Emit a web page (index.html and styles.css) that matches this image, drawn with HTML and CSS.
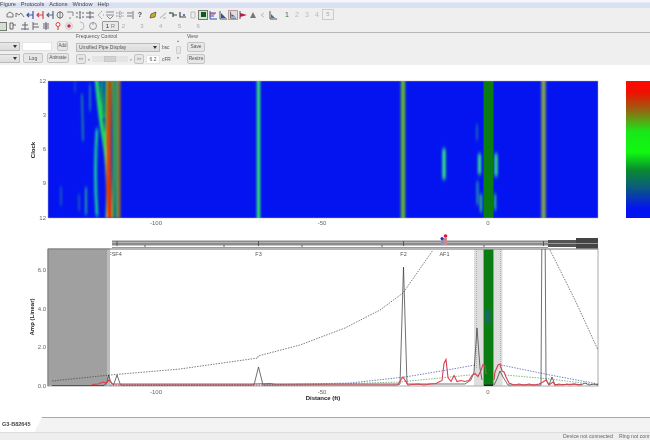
FILE: index.html
```html
<!DOCTYPE html>
<html lang="en">
<head>
<meta charset="utf-8">
<title>G3-B82645</title>
<link rel="stylesheet" href="styles.css">
</head>
<body>
<div class="app">
  <nav class="menu"><span>Figure</span><span>Protocols</span><span>Actions</span><span>Window</span><span>Help</span></nav>

  <div class="tools">
    <div class="row row-a">
      <svg class="ic" viewBox="0 0 10 10"><path d="M2 7h6V4L5 2 2 4z" fill="none" stroke="#777"/></svg>
      <svg class="ic" viewBox="0 0 10 10"><path d="M1 7V3l3 2 2-2 3 4" fill="none" stroke="#777"/></svg>
      <svg class="ic" viewBox="0 0 10 10"><path d="M8 1v8M8 5H2M4 3L2 5l2 2" fill="none" stroke="#3a55b0" stroke-width="1.2"/></svg>
      <svg class="ic" viewBox="0 0 10 10"><path d="M8 1v8M8 5H2M4 3L2 5l2 2" fill="none" stroke="#d0405a" stroke-width="1.2"/></svg>
      <svg class="ic" viewBox="0 0 10 10"><path d="M8 1v8M8 5H2M4 3L2 5l2 2" fill="none" stroke="#556688" stroke-width="1.2"/></svg>
      <svg class="ic" viewBox="0 0 10 10"><circle cx="5" cy="5" r="3" fill="none" stroke="#777"/><path d="M5 1v8" stroke="#777"/></svg>
      <svg class="ic" viewBox="0 0 10 10"><path d="M2 2h6v4M6 8H4" fill="none" stroke="#888"/></svg>
      <svg class="ic" viewBox="0 0 10 10"><path d="M1 3h8M1 7h8M5 1v8" fill="none" stroke="#667" stroke-dasharray="2 1"/></svg>
      <svg class="ic" viewBox="0 0 10 10"><path d="M1 3h8M1 7h8M5 1v8" fill="none" stroke="#667"/></svg>
      <svg class="ic" viewBox="0 0 10 10"><path d="M7 1L3 5l4 4M8 5h1" fill="none" stroke="#999" stroke-dasharray="2 1"/></svg>
      <svg class="ic" viewBox="0 0 10 10"><path d="M1 2h8M2 6l3 3 3-3M1 5h8" fill="none" stroke="#889"/></svg>
      <svg class="ic" viewBox="0 0 10 10"><path d="M1 3h8M1 6h8M5 1v8" fill="none" stroke="#889" stroke-dasharray="1.5 1"/></svg>
      <svg class="ic" viewBox="0 0 10 10"><path d="M8 1v8M2 3h5M2 6h5" fill="none" stroke="#778"/></svg>
      <span class="glyph">?</span>
      <i class="sp3"></i>
      <svg class="ic" viewBox="0 0 10 10"><path d="M2 8l1-4 5-2-1 5z" fill="#c8b020" stroke="#333" stroke-width=".6"/></svg>
      <svg class="ic" viewBox="0 0 10 10"><path d="M2 8l6-5M5 8h3" stroke="#aaa" fill="none"/></svg>
      <svg class="ic" viewBox="0 0 10 10"><path d="M2 3h3v4M5 5h4" stroke="#445" fill="none" stroke-width="1.2"/><circle cx="2" cy="3" r="1" fill="#2a9040"/></svg>
      <svg class="ic" viewBox="0 0 10 10"><path d="M2 2v5h6" stroke="#445" fill="none" stroke-width="1.2"/><circle cx="6" cy="5" r="1" fill="#2a50a0"/></svg>
      <svg class="ic" viewBox="0 0 10 10"><path d="M3 2h4v6H3z" stroke="#bbb" fill="none"/></svg>
      <span class="active"><b></b></span>
      <svg class="ic" viewBox="0 0 10 10"><path d="M2 1v8h7M2 3h6M2 6h4" stroke="#3050b0" fill="none"/><path d="M2 4h5" stroke="#c04050"/></svg>
      <svg class="ic" viewBox="0 0 10 10"><path d="M2 1v8h7" stroke="#555" fill="none"/><path d="M3 8V3l5 5z" fill="#3050b0"/></svg>
      <span class="hi"><svg viewBox="0 0 10 10"><path d="M2 1v8h7" stroke="#444" fill="none"/><path d="M3 7V4l5 3z" fill="#3050b0"/></svg></span>
      <svg class="ic" viewBox="0 0 10 10"><path d="M2 1v8" stroke="#555"/><path d="M2 3l7 2-7 2z" fill="#b02040"/></svg>
      <svg class="ic" viewBox="0 0 10 10"><path d="M5 2l3 6H2z" fill="#777"/></svg>
      <svg class="ic" viewBox="0 0 10 10"><path d="M3 5l3-2M3 5l3 2" stroke="#bbb" fill="none"/></svg>
      <svg class="ic" viewBox="0 0 10 10"><path d="M2 1v8h7" stroke="#555" fill="none"/><path d="M3 8V4l4 4z" fill="#4a70a0"/></svg>
      <i class="sp4"></i>
      <span class="num strong">1</span><span class="num">2</span><span class="num">3</span><span class="num">4</span><span class="num boxed">5</span>
    </div>
    <div class="row row-b">
      <span class="greenbox"></span>
      <svg class="ic ml1" viewBox="0 0 10 10"><path d="M2 2h3v6H2zM5 4h3" stroke="#666" fill="none"/></svg>
      <svg class="ic ml2" viewBox="0 0 10 10"><path d="M5 1v8M2 4h6M1 8h8" stroke="#667" fill="none"/></svg>
      <svg class="ic" viewBox="0 0 10 10"><path d="M3 1v8M3 3h5M3 6h6" stroke="#667" fill="none"/></svg>
      <svg class="ic ml1" viewBox="0 0 10 10"><path d="M5 1v8M2 3h6M2 5h6M2 7h6" stroke="#667" fill="none"/></svg>
      <svg class="ic ml2" viewBox="0 0 10 10"><circle cx="5" cy="3.500" r="2" fill="#fff" stroke="#d04040"/><path d="M5 6v3" stroke="#c03030"/></svg>
      <svg class="ic ml1" viewBox="0 0 10 10"><circle cx="5" cy="5" r="3.500" fill="#eee" stroke="#ccc"/><circle cx="5" cy="5" r="1.800" fill="#c83048"/></svg>
      <svg class="ic ml2" viewBox="0 0 10 10"><path d="M4 1a4 4 0 0 1 0 8" stroke="#bbb" fill="none"/></svg>
      <svg class="ic ml2" viewBox="0 0 10 10"><circle cx="5" cy="5" r="3.500" stroke="#999" fill="none"/><path d="M5 1v3" stroke="#999"/></svg>
      <span class="onebtn">1 <em>R</em></span>
      <span class="tab-num">2</span><span class="tab-num">3</span><span class="tab-num">4</span><span class="tab-num">5</span><span class="tab-num">6</span>
    </div>
  </div>

  <div class="panel">
    <div class="grp grp-a">
      <div class="line"><span class="sel sel-s"></span><span class="inp inp-a"></span><span class="btn btn-add">Add</span></div>
      <div class="line"><span class="sel sel-s"></span><span class="btn btn-log">Log</span><span class="btn btn-ani">Animate</span></div>
    </div>
    <div class="grp grp-b">
      <div class="cap">Frequency Control</div>
      <div class="line"><span class="sel sel-f">Unsified Pipe Display</span><span class="unit">bsc</span></div>
      <div class="line"><span class="btn btn-sm">&lt;&lt;</span><span class="arrow">&lt;</span><span class="track"><span class="thumb"></span></span><span class="arrow">&gt;</span><span class="btn btn-sm">&gt;&gt;</span><span class="inp inp-v">6.2</span><span class="unit">cFR</span></div>
    </div>
    <div class="spin"><span>&#9650;</span><i></i><span>&#9660;</span></div>
    <div class="grp grp-c">
      <div class="cap">View</div>
      <div class="line"><span class="btn btn-v">Save</span></div>
      <div class="line"><span class="btn btn-v">Resize</span></div>
    </div>
  </div>

  <svg class="plots" viewBox="0 65 650 352" xmlns="http://www.w3.org/2000/svg">
    <defs>
      <filter id="b1" x="-50%" y="-20%" width="200%" height="140%"><feGaussianBlur stdDeviation="0.9"/></filter>
      <filter id="b2" x="-200%" y="-30%" width="500%" height="160%"><feGaussianBlur stdDeviation="0.9 2.2"/></filter>
      <linearGradient id="scale" x1="0" y1="0" x2="0" y2="1">
        <stop offset="0" stop-color="#ff0a00"/><stop offset=".08" stop-color="#f01000"/>
        <stop offset=".2" stop-color="#a05a10"/><stop offset=".37" stop-color="#18e818"/>
        <stop offset=".52" stop-color="#10f810"/><stop offset=".65" stop-color="#0a8a30"/>
        <stop offset=".78" stop-color="#0a5a80"/><stop offset=".93" stop-color="#0414f0"/>
        <stop offset="1" stop-color="#0414f0"/>
      </linearGradient>
      <linearGradient id="hot" gradientUnits="userSpaceOnUse" x1="0" y1="81" x2="0" y2="218">
        <stop offset="0" stop-color="#a85a10"/><stop offset=".5" stop-color="#d84a08"/><stop offset="1" stop-color="#f02c04"/>
      </linearGradient>
      <clipPath id="heat"><rect x="48" y="81" width="550" height="137"/></clipPath>
      <clipPath id="amp"><rect x="48" y="249" width="550" height="137"/></clipPath>
    </defs>

    <!-- heat map -->
    <rect x="48" y="81" width="550" height="137" fill="#0414f0"/>
    <g clip-path="url(#heat)">
      <g filter="url(#b2)" fill="none" stroke-linecap="round">
        <path d="M90 85v25" stroke="#1a70b0" stroke-width="2"/>
        <path d="M82 95l1 45" stroke="#1a80a0" stroke-width="2"/>
        <path d="M86 188v26" stroke="#1aa0a0" stroke-width="2"/>
        <path d="M79 195v15" stroke="#1a70b0" stroke-width="1.500"/>
        <path d="M61 187v18" stroke="#1a70b0" stroke-width="1.500"/>
        <path d="M75 80v12" stroke="#1a50c0" stroke-width="1.500"/>
        <path d="M97 130q-3 40 0 85" stroke="#18c0a0" stroke-width="3"/>
        <path d="M444 150v28" stroke="#30e080" stroke-width="3.500"/>
        <path d="M479.500 155v18" stroke="#30d090" stroke-width="3.500"/>
        <path d="M496 155v20" stroke="#30d090" stroke-width="3.500"/>
        <path d="M477 125v15" stroke="#1a80a0" stroke-width="1.500"/>
        <path d="M477.500 182v22" stroke="#20a0a0" stroke-width="2"/>
        <path d="M481 195v16" stroke="#30b090" stroke-width="2.500"/>
        <path d="M495 195v14" stroke="#30b090" stroke-width="2.500"/>
      </g>
      <g filter="url(#b1)" fill="none">
        <path d="M102 78q0 25 1 40" stroke="#18a060" stroke-width="3"/>
        <path d="M96.500 78q3 35 8 65t3 75" stroke="#20d860" stroke-width="4"/>
        <path d="M106.500 78q-1 40 0 70" stroke="#20c040" stroke-width="2.500"/>
        <path d="M109.500 78q-1 60 -1 85t1 55" stroke="url(#hot)" stroke-width="5"/>
        <path d="M113.500 78q1 70 -0.500 140" stroke="#3cb030" stroke-width="2.500"/>
        <path d="M116.500 78v140" stroke="#20c050" stroke-width="2"/>
        <path d="M119 78v140" stroke="#96701c" stroke-width="3"/>
        <path d="M258.500 78v142" stroke="#30e070" stroke-width="3.500"/>
        <path d="M403 78v142" stroke="#60b038" stroke-width="4.500"/>
        <path d="M543.500 78v142" stroke="#80a050" stroke-width="4.500"/>
      </g>
      <rect x="483.500" y="81" width="10" height="137" fill="#0a7d12"/>
    </g>
    <rect x="48" y="81" width="550" height="137" fill="none" stroke="#aaa" stroke-width=".5"/>
    <rect x="626" y="81" width="30" height="137" fill="url(#scale)"/>

    <text class="t tick" x="46" y="83">12</text>
    <text class="t tick" x="46" y="117">3</text>
    <text class="t tick" x="46" y="151">6</text>
    <text class="t tick" x="46" y="185">9</text>
    <text class="t tick" x="46" y="220">12</text>
    <text class="t label" transform="translate(35 150) rotate(-90)">Clock</text>
    <text class="t mid" x="156" y="225">-100</text>
    <text class="t mid" x="322" y="225">-50</text>
    <text class="t mid" x="488" y="225">0</text>

    <!-- pipe strip -->
    <rect x="112" y="240.500" width="436" height="5" fill="#8c8c8c"/>
    <path d="M112 242.500h436" stroke="#cfcfcf" stroke-width=".6"/>
    <path d="M112 247.500H548" stroke="#999" stroke-width="1"/>
    <rect x="548" y="240" width="50" height="7" fill="#555"/>
    <rect x="576" y="238" width="22" height="11" fill="#444"/>
    <path d="M576 243.500h22M548 243.500h28" stroke="#aaa" stroke-width=".8"/>
    <path d="M117 241v5M145 245v2M224 245v2M258.500 241v5M302 245v2M382 245v2M403.500 241v5M484 245v2M543.500 241v5" stroke="#444" stroke-width=".8"/>
    <rect x="441" y="238" width="3" height="7" fill="#8a90c8"/>
    <rect x="444" y="238" width="3" height="7" fill="#c88a90"/>
    <circle cx="442" cy="238.500" r="1.500" fill="#2030c0"/>
    <circle cx="445.500" cy="236" r="1.800" fill="#e01030"/>

    <text class="t mark" x="115" y="255.500">FSF4</text>
    <text class="t mark" x="258.500" y="255.500">F3</text>
    <text class="t mark" x="403.500" y="255.500">F2</text>
    <text class="t mark" x="444.500" y="255.500">AF1</text>

    <!-- amplitude plot -->
    <rect x="48" y="249" width="59" height="137" fill="#a0a0a0"/>
    <rect x="107" y="249" width="3" height="137" fill="#bcbcbc"/>
    <rect x="474" y="249" width="9.500" height="137" fill="#dedede"/>
    <rect x="493.500" y="249" width="9" height="137" fill="#dedede"/>
    <rect x="483.500" y="249" width="10" height="137" fill="#0a7d12"/>
    <path d="M488 310v14" stroke="#1a6a60" stroke-width="5" stroke-dasharray="1 1"/>
    <path d="M476.500 249v120M500.500 249v120" stroke="#999" stroke-width=".7" stroke-dasharray="1 1"/>
    <rect x="48" y="249" width="550" height="137" fill="none" stroke="#aaa" stroke-width="1"/>
    <path d="M110 249H598" stroke="#888" stroke-width=".8"/>
    <path d="M48 249h62M48 249v137" stroke="#777" stroke-width="1"/>

    <g clip-path="url(#amp)" fill="none">
      <path d="M52 381L110 375 180 369 258 358v-2L300 345 345 328 380 310 403 293 433 250" stroke="#444" stroke-width=".7" stroke-dasharray="1.500 1.200"/>
      <path d="M550 250L575 300 598 350" stroke="#444" stroke-width=".7" stroke-dasharray="1.500 1.200"/>
      <path d="M110 385L260 385 350 383 405 377 447 370 475 365M501 365L550 375 598 384" stroke="#3a50b0" stroke-width=".7" stroke-dasharray="1.500 1.200"/>
      <path d="M110 385.500L300 385 400 382 470 375M505 375L550 379 598 385" stroke="#4a9a50" stroke-width=".7" stroke-dasharray="1.500 1.200"/>
      <path d="M52 385.500H104l3-3 1.500-7.500 2 6 3 4 3.500-10 3.500 10H254l4.500-18 4.500 18H397l3 -1 3.500-117 3.500 117H465l6 -4 3 -8 3 -44 3 40 2 12M494 385l3-6 3-8 3 6 5 8h33l1-170h3l1 164 3 6 3-8 3 8 20-1 6 1 4-2 4 2 5-1 5 1" stroke="#333" stroke-width=".7"/>
      <path d="M92 384.500l6-.5 5-2 3 1 3-3 3 4H250l20-.5 5 .5H398l5-7 5 8 10-1 6 1 6-1 6-.5 6-3 2-17 2-4 2 18 3 4 3-6 3 6 4-1 4 1 4-1 3-5 3-2 3 3 3-6 2-6 2 1 1 8h1M494 380l1-8 3-7 2-1 2 7 2 1 2 5 3 6 5 2 5-1 5 1 5-1 5 1 5-1 4-2 3-2 3 5 4-3 2 3 4-1 4 1 4-1 3 1 4-1 4 1 4-1" stroke="#d84050" stroke-width="1.100"/>
      <path d="M484 386h9" stroke="#222" stroke-width="3"/>
    </g>

    <text class="t tick" x="46" y="272">6.0</text>
    <text class="t tick" x="46" y="311">4.0</text>
    <text class="t tick" x="46" y="349">2.0</text>
    <text class="t tick" x="46" y="388">0.0</text>
    <text class="t label" transform="translate(34 317) rotate(-90)">Amp (Linear)</text>
    <text class="t mid" x="156" y="394">-100</text>
    <text class="t mid" x="322" y="394">-50</text>
    <text class="t mid" x="488" y="394">0</text>
    <text class="t label" x="323" y="400">Distance (ft)</text>
  </svg>

  <div class="tabs"><span class="tab">G3-B82645</span></div>
  <footer class="status"><span class="st-a">Device not connected</span><span class="st-b">Ring not connected</span></footer>
</div>
</body>
</html>
```

FILE: styles.css
```css
* { box-sizing: border-box; }
html, body { margin: 0; padding: 0; background: #fff; }
body { font-family: "Liberation Sans", Arial, sans-serif; }

.app {
  width: 650px;
  height: 440px;
  display: flex;
  flex-direction: column;
  overflow: hidden;
  filter: blur(0.6px);
}

/* menu */
.menu {
  height: 8px;
  flex: none;
  display: flex;
  gap: 5px;
  padding-left: 0;
  font-size: 5.6px;
  line-height: 8px;
  color: #444;
  background: linear-gradient(#f4f6fb 0, #f4f6fb 2px, #d8e0f2 3px, #d8e0f2 100%);
  overflow: hidden;
}

/* toolbars */
.tools {
  height: 25px;
  flex: none;
  padding-top: 1px;
  background: #efefef;
  border-bottom: 1px solid #b6b6b6;
}
.row { height: 11.500px; display: flex; align-items: center; }
.row-a { padding-left: 5px; }
.ic { width: 10px; height: 10px; flex: none; }
.glyph { width: 10px; text-align: center; font-size: 7px; font-weight: bold; color: #444; }
.sp3 { width: 3px; flex: none; }
.sp4 { width: 4px; flex: none; }
.active {
  width: 10px; height: 10px; flex: none;
  display: flex; align-items: center; justify-content: center;
  border: 1px solid #777;
  background: #cfe8cf;
}
.active b { width: 5px; height: 5px; background: #145a20; }
.hi {
  width: 10px; height: 10px; flex: none;
  display: block;
  border: 1px solid #b99;
  background: #ddd;
}
.hi svg { display: block; width: 8px; height: 8px; }
.num { width: 10px; text-align: center; font-size: 7px; color: #bbb; }
.num.strong { color: #3a6a3a; }
.num.boxed { height: 11px; line-height: 9px; width: 12px; border: 1px solid #ccc; color: #aaa; font-size: 6px; }

.greenbox { width: 7px; height: 9px; flex: none; background: #cfe4cf; border: 1px solid #777; border-left: 0; }
.ml1 { margin-left: 1px; }
.ml2 { margin-left: 2px; }
.onebtn {
  flex: none;
  width: 17px; height: 10px;
  margin-left: 4px;
  margin-right: -5px;
  border: 1px solid #999;
  border-radius: 1px;
  background: #e8e8e8;
  font-size: 6px;
  line-height: 8px;
  text-align: center;
  color: #333;
}
.onebtn em { font-style: normal; color: #888; }
.tab-num { width: 18.700px; flex: none; font-size: 6px; text-align: center; color: #aaa; }

/* control panel */
.panel {
  height: 32px;
  flex: none;
  display: flex;
  padding-top: 1px;
  background: #efefef;
  font-size: 5px;
  color: #555;
}
.grp { display: flex; flex-direction: column; gap: 2px; }
.grp-a { width: 76px; padding-top: 7px; }
.grp-b { width: 99px; }
.grp-c { width: 19px; margin-left: 6px; }
.cap { height: 5px; line-height: 5px; margin-bottom: 1px; color: #555; }
.line { height: 10px; display: flex; align-items: center; }
.sel {
  height: 9px;
  line-height: 7px;
  padding-left: 2px;
  border: 1px solid #bbb;
  background: linear-gradient(#e8e8e8, #dcdcdc);
  color: #555;
  position: relative;
}
.sel::after {
  content: "";
  position: absolute;
  right: 2px; top: 2px;
  border: 2px solid transparent;
  border-top: 3px solid #333;
  border-bottom: 0;
}
.sel-s { width: 20px; border-left: 0; }
.sel-f { width: 84px; }
.inp { height: 9px; background: #fff; border: 1px solid #e4e4e4; }
.inp-a { width: 30px; margin: 0 5px 0 2px; }
.inp-v { width: 14px; margin-left: 2px; line-height: 7px; text-align: center; }
.btn {
  height: 10px;
  line-height: 8px;
  text-align: center;
  border: 1px solid #c4c4c4;
  border-radius: 2px;
  background: #e6e6e6;
  color: #555;
  flex: none;
}
.btn-add { width: 11px; font-size: 4.500px; }
.btn-log { width: 20px; margin-left: 3px; }
.btn-ani { width: 22px; margin-left: 4px; font-size: 4.800px; }
.btn-sm { width: 10px; font-size: 4px; }
.btn-v { width: 18px; font-size: 4.800px; }
.unit { margin-left: 2px; font-size: 4.800px; }
.arrow { width: 6px; text-align: center; font-size: 4px; }
.track {
  width: 36px; height: 6px;
  background: #e4e4e4;
  display: flex;
  justify-content: center;
}
.thumb { width: 12px; height: 6px; background: #d2d2d2; border: 1px solid #c8c8c8; }
.spin {
  width: 6px;
  flex: none;
  padding-top: 5px;
  display: flex;
  flex-direction: column;
  align-items: center;
  font-size: 3px;
  line-height: 5px;
  color: #666;
}
.spin i { width: 5px; height: 8px; margin: 2px 0; background: #e6e6e6; border: 1px solid #ccc; border-radius: 1px; }

/* plots */
.plots { display: block; width: 650px; height: 352px; flex: none; background: #fff; }
.t { font-family: "Liberation Sans", Arial, sans-serif; font-size: 6px; fill: #666; }
.tick { text-anchor: end; }
.mid { text-anchor: middle; }
.mark { text-anchor: middle; font-size: 5.500px; fill: #555; }
.label { text-anchor: middle; font-weight: bold; fill: #222; }

/* tabs and status */
.tabs {
  height: 16px;
  flex: none;
  background: linear-gradient(#a8a8a8 0, #a8a8a8 1px, #f3f3f3 1px);
  border-bottom: 1px solid #ddd;
  display: flex;
}
.tab {
  width: 42px;
  padding-left: 2px;
  background: #fff;
  font-size: 5.500px;
  font-weight: bold;
  line-height: 15px;
  color: #444;
  clip-path: polygon(0 0, 100% 0, 82% 100%, 0 100%);
}
.status {
  height: 7px;
  flex: none;
  display: flex;
  background: #eee;
  font-size: 5.200px;
  line-height: 7px;
  color: #666;
  overflow: hidden;
  white-space: nowrap;
  padding-left: 563px;
}
.st-a { flex: none; }
.st-b { margin-left: 6px; flex: none; }
```
